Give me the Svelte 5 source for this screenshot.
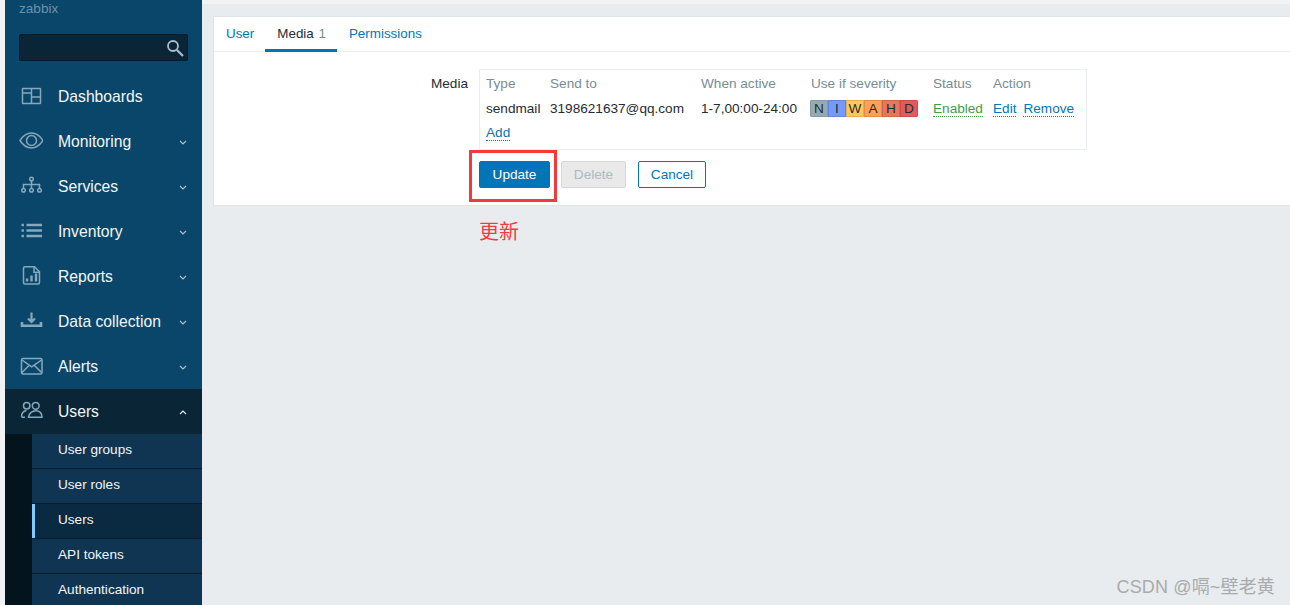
<script>
  const menu = [
    { label: 'Dashboards', icon: 'dash', chevron: false },
    { label: 'Monitoring', icon: 'eye', chevron: true },
    { label: 'Services', icon: 'tree', chevron: true },
    { label: 'Inventory', icon: 'list', chevron: true },
    { label: 'Reports', icon: 'report', chevron: true },
    { label: 'Data collection', icon: 'download', chevron: true },
    { label: 'Alerts', icon: 'mail', chevron: true }
  ];
  const sub = ['User groups', 'User roles', 'Users', 'API tokens', 'Authentication'];
  const sev = [
    { l: 'N', c: '#97aab3', b: '#859ba5' },
    { l: 'I', c: '#7499ff', b: '#5f86e0' },
    { l: 'W', c: '#ffc859', b: '#e0ae4c' },
    { l: 'A', c: '#ffa059', b: '#e08c4d' },
    { l: 'H', c: '#e97659', b: '#cf674d' },
    { l: 'D', c: '#e45959', b: '#c94d4d' }
  ];
</script>

{#snippet icon(name)}
  <svg class="ico" viewBox="0 0 24 24" width="24" height="24" fill="none" stroke="#86a8bd" stroke-width="1.5">
    {#if name === 'dash'}
      <rect x="3.500" y="2.500" width="18" height="15" rx="0.500" /><path d="M12.500 2.500V17.500M3.500 7h9M12.500 11h9" />
    {:else if name === 'eye'}
      <path d="M1 9.500C4.500 4 8.500 2 12.500 2s8 2 11.500 7.500C20.500 15 16.500 17 12.500 17s-8-2-11.500-7.500z" /><circle cx="12.500" cy="9.500" r="5" />
    {:else if name === 'tree'}
      <circle cx="12.500" cy="3" r="1.800" /><path d="M12.500 4.800V8.500M4.500 12V8.500H20.500V12M12.500 8.500V12" /><circle cx="4.500" cy="14.300" r="1.800" /><circle cx="12.500" cy="14.300" r="1.800" /><circle cx="20.500" cy="14.300" r="1.800" />
    {:else if name === 'list'}
      <path stroke-width="2.400" d="M7.500 4h15.500M7.500 9.500h15.500M7.500 15h15.500M2.500 4h2.400M2.500 9.500h2.400M2.500 15h2.400" />
    {:else if name === 'report'}
      <path d="M6 0.800H15.500l5 5V16.500a1.500 1.500 0 0 1-1.500 1.500H6A1.500 1.500 0 0 1 4.500 16.500V2.300A1.500 1.500 0 0 1 6 0.800z" /><path d="M15 1V6.300H20.500" /><path stroke-width="2.400" d="M8 15.500v-3M12.500 15.500V9.500M17 15.500V7.500" />
    {:else if name === 'download'}
      <path stroke-width="2.200" d="M12.500 1.500v9M9 7.500l3.500 3.500L16 7.500" /><path stroke-width="2.600" d="M3 11v3.800h19V11" />
    {:else if name === 'mail'}
      <rect x="2.500" y="2.500" width="20.500" height="15.500" rx="1.500" /><path d="M3 4l9.700 6.800L22.500 4M3 16.500l7.500-7.500M22.500 16.500L15 9" />
    {:else if name === 'users'}
      <circle cx="7.700" cy="4.800" r="3.200" /><circle cx="16.700" cy="4.800" r="3.400" /><path d="M2.500 15.800c0-3.500 1.500-5.700 5-6.300M9.500 16.200h13.500c0-4.200-2.500-6.500-6-6.500s-7 2.300-7.500 6.500zM2.500 16.200H6" />
    {/if}
  </svg>
{/snippet}

<div class="page">
  <aside class="sidebar">
    <div class="brand">zabbix</div>
    <div class="search">
      <svg viewBox="0 0 18 18" width="18" height="18" fill="none" stroke="#a9bfcc" stroke-width="1.800">
        <circle cx="7" cy="7" r="5" /><path stroke-width="2.200" d="M11 11l6 6" />
      </svg>
    </div>
    <nav>
      {#each menu as m}
        <div class="item">
          <span class="icwrap">{@render icon(m.icon)}</span>
          <span>{m.label}</span>
          {#if m.chevron}
            <svg class="chev" viewBox="0 0 8 5" width="8" height="5" fill="none" stroke="#a9bfcc" stroke-width="1.200"><path d="M1 1l3 3 3-3" /></svg>
          {/if}
        </div>
      {/each}
      <div class="item active">
        <span class="icwrap">{@render icon('users')}</span>
        <span>Users</span>
        <svg class="chev" viewBox="0 0 8 5" width="8" height="5" fill="none" stroke="#e6eef3" stroke-width="1.200"><path d="M1 4l3-3 3 3" /></svg>
      </div>
      <div class="submenu">
        {#each sub as s, i}
          <div class="subitem" class:current={i === 2}>{s}</div>
        {/each}
      </div>
    </nav>
  </aside>

  <main class="main">
    <section class="card">
      <div class="tabs">
        <a class="tab first">User</a>
        <a class="tab selected">Media <span class="count">1</span></a>
        <a class="tab">Permissions</a>
      </div>
      <div class="form">
        <div class="label">Media</div>
        <div class="fields">
          <div class="mediabox">
            <table>
              <thead>
                <tr>
                  <th class="c1">Type</th><th class="c2">Send to</th><th class="c3">When active</th><th class="c4">Use if severity</th><th class="c5">Status</th><th>Action</th>
                </tr>
              </thead>
              <tbody>
                <tr>
                  <td>sendmail</td>
                  <td>3198621637@qq.com</td>
                  <td>1-7,00:00-24:00</td>
                  <td>
                    <div class="sev">
                      {#each sev as s}
                        <span style="background:{s.c};border-color:{s.b}">{s.l}</span>
                      {/each}
                    </div>
                  </td>
                  <td><span class="dotted green">Enabled</span></td>
                  <td class="actions"><span class="dotted">Edit</span><span class="dotted">Remove</span></td>
                </tr>
                <tr><td colspan="6"><span class="dotted">Add</span></td></tr>
              </tbody>
            </table>
          </div>
          <div class="buttons">
            <button class="primary">Update</button>
            <button class="disabled">Delete</button>
            <button class="outline">Cancel</button>
          </div>
        </div>
      </div>
      <div class="redbox"></div>
      <div class="note">更新</div>
    </section>
  </main>
  <div class="watermark">CSDN @嗝~壁老黄</div>
</div>

<style>
  :global(body) { margin: 0; background: #ebeef0; }
  .page {
    width: 1290px; height: 605px; overflow: hidden; position: relative;
    display: flex; background: #e9ecef;
    font-family: "Liberation Sans", Arial, sans-serif; font-size: 13.6px; color: #1f2c33;
  }
  .sidebar {
    width: 202px; box-sizing: border-box; border-left: 5px solid #f0f2f4; flex: none; background: #0a466a; color: #f2f6f8;
    height: 605px;
  }
  .brand { color: #6d92a8; font-size: 13.6px; line-height: 16px; height: 16px; padding: 1px 0 0 14px; }
  .search {
    margin: 17px 14px 13px 14px; height: 25px; background: #0a2536;
    border: 1px solid #051a27; border-radius: 2px;
    display: flex; align-items: center; justify-content: flex-end; padding-right: 3px;
  }
  .item {
    height: 45px; display: flex; align-items: center; font-size: 15.7px; position: relative;
  }
  .icwrap { width: 53px; display: flex; padding-left: 14px; box-sizing: border-box; }
  .ico { display: block; margin-top: 2px; }
  .chev { position: absolute; left: 174px; top: 21px; }
  .active { background: #0a2536; }
  .submenu { background: #04141c; padding-left: 27px; }
  .subitem {
    height: 34px; line-height: 32px; padding-left: 26px; background: #0f3552;
    border-bottom: 1px solid #071c2a; font-size: 13.6px; position: relative;
  }
  .current { background: #0a2a41; }
  .current::before {
    content: ""; position: absolute; left: 0; top: 0; bottom: 0; width: 3px; background: #7ecbff;
  }
  .main { flex: 1; min-width: 0; border-top: 4px solid #f2f3f4; padding: 12px 0 0 11px; }
  .card {
    background: #fff; border: 1px solid #dfe4e7; border-right: 0; height: 188px; position: relative;
  }
  .tabs { height: 34px; border-bottom: 1px solid #ebeef0; display: flex; font-size: 13.4px; }
  .tab {
    color: #0275b8; padding: 0 12px; line-height: 33px; height: 34px; box-sizing: border-box; white-space: nowrap;
  }
  .first { padding-right: 11px; }
  .selected { color: #1f2c33; border-bottom: 3px solid #0275b8; height: 35px; padding-right: 11px; }
  .count { color: #768d99; margin-left: 1px; }
  .form { display: flex; padding-top: 17px; }
  .label { width: 265px; text-align: right; line-height: 30px; padding-right: 11px; box-sizing: border-box; height: 30px; }
  .mediabox { border: 1px solid #ebeef0; width: 608px; height: 81px; box-sizing: border-box; padding-left: 6px; }
  table { border-collapse: collapse; }
  th { font-weight: normal; color: #768d99; text-align: left; padding: 0; height: 26px; }
  td { padding: 0; height: 24px; white-space: nowrap; }
  .c1 { width: 64px; } .c2 { width: 151px; } .c3 { width: 110px; } .c4 { width: 122px; } .c5 { width: 60px; }
  .dotted { color: #0275b8; border-bottom: 1px dotted #0275b8; }
  .green { color: #429e47; border-bottom-color: #429e47; }
  .actions .dotted + .dotted { margin-left: 7px; }
  .sev { display: inline-flex; border-radius: 2px; overflow: hidden; vertical-align: middle; margin-left: -1px; }
  .sev span {
    height: 17px; line-height: 15px; width: 18px; box-sizing: border-box; text-align: center;
    border: 1px solid; color: #1f2c33;
  }
  .buttons { display: flex; margin-top: 11px; }
  button {
    height: 27px; font: inherit; border-radius: 2px; padding: 0; box-sizing: border-box; border: 1px solid;
  }
  .primary { width: 71px; margin-right: 11px; background: #0275b8; border-color: #0275b8; color: #fff; }
  .disabled { width: 65px; margin-right: 12px; background: #e9e9e9; border-color: #d4d8da; color: #acbbc2; }
  .outline { width: 68px; background: #fff; border-color: #0275b8; color: #0275b8; }
  .redbox {
    position: absolute; left: 255px; top: 133px; width: 88px; height: 52px;
    border: 3px solid #f23a3a; box-sizing: border-box;
  }
  .note {
    position: absolute; left: 265px; top: 201px; font-size: 20px; line-height: 26px; color: #f03c3c;
    font-family: "Noto Sans CJK SC", sans-serif;
  }
  .watermark {
    position: absolute; right: 15px; top: 576px; font-size: 18px; line-height: 22px; color: #a8abad;
    letter-spacing: 0.15px;
    font-family: "Liberation Sans", "Noto Sans CJK SC", sans-serif; white-space: nowrap;
  }
</style>
